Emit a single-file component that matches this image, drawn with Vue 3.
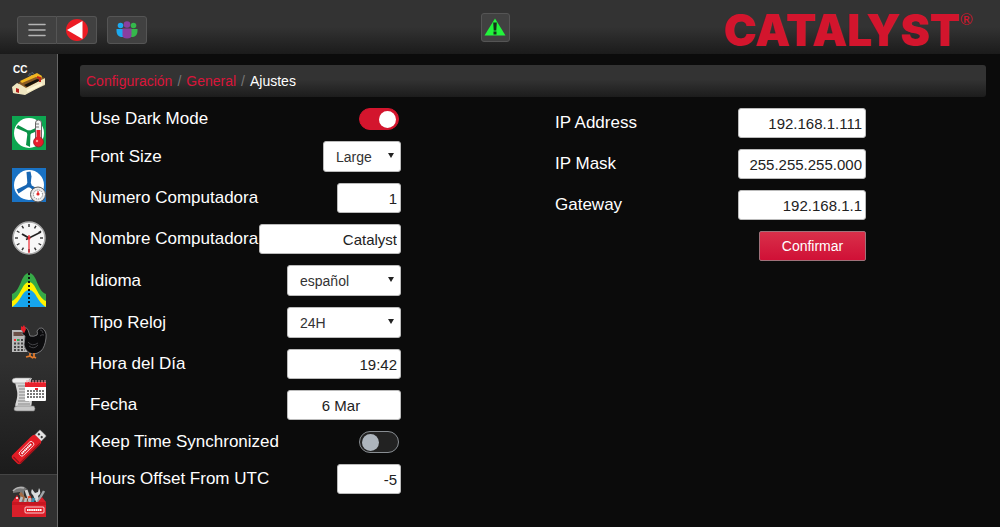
<script setup>
import { reactive, ref } from 'vue';

const menuItems = [
    { id: 'house', title: 'Control' },
    { id: 'temperature', title: 'Temperatura' },
    { id: 'fan', title: 'Ventilación' },
    { id: 'clock', title: 'Reloj' },
    { id: 'curve', title: 'Curva' },
    { id: 'flock', title: 'Lote' },
    { id: 'history', title: 'Historial' },
    { id: 'usb', title: 'USB' },
    { id: 'tools', title: 'Configuración' }
];
const activeItem = ref('tools');

const settings = reactive({
    darkMode: true,
    fontSize: 'Large',
    number: '1',
    name: 'Catalyst',
    language: 'español',
    clockType: '24H',
    time: '19:42',
    date: '6 Mar',
    keepSync: false,
    utcOffset: '-5'
});

const network = reactive({
    address: '192.168.1.111',
    mask: '255.255.255.000',
    gateway: '192.168.1.1'
});

// clock face ticks, one every 30 degrees
const ticks = Array.from({ length: 12 }, (_, i) => i * 30);
</script>

<template>
    <div class="app">
        <header class="topbar">
            <div class="topbar-left">
                <div class="btn-group">
                    <button type="button" class="tool-btn" aria-label="Menú">
                        <svg width="18" height="14" viewBox="0 0 18 14">
                            <path d="M1 1.5h16M1 7h16M1 12.5h16" stroke="#b4b4b4" stroke-width="1.6" stroke-linecap="round" />
                        </svg>
                    </button>
                    <button type="button" class="tool-btn" aria-label="Atrás">
                        <svg width="22" height="22" viewBox="0 0 22 22">
                            <circle cx="11" cy="11" r="11" fill="#ec1c24" />
                            <path d="M1 11L16.5 2v18z" fill="#fff" />
                        </svg>
                    </button>
                </div>
                <button type="button" class="tool-btn" aria-label="Usuarios">
                    <svg width="22" height="18" viewBox="0 0 22 18">
                        <circle cx="4.5" cy="4.5" r="2.8" fill="#1caaf0" />
                        <path d="M.5 8h7.5v8H5Q.5 15 .5 10z" fill="#1caaf0" />
                        <circle cx="17.5" cy="4.5" r="2.8" fill="#35b84b" />
                        <path d="M14 8h7.5v2q0 5-4.5 6h-3z" fill="#35b84b" />
                        <circle cx="11" cy="3.5" r="3.3" fill="#8a3fa0" />
                        <path d="M6.5 7.5h9v7q0 3-4.5 3t-4.5-3z" fill="#8a3fa0" />
                    </svg>
                </button>
            </div>
            <button type="button" class="tool-btn alarm" aria-label="Alarmas">
                <svg width="22" height="18" viewBox="0 0 22 18">
                    <path d="M11 .5L21.5 17.5H.5z" fill="#22f53c" />
                    <path d="M9.2 4.5h3.6l-.5 8H9.7z" fill="#14301a" />
                    <rect x="9.5" y="13.5" width="3" height="3" fill="#14301a" />
                </svg>
            </button>
            <div class="logo"><span>CATALYST</span><sup>®</sup></div>
        </header>

        <div class="body">
            <nav class="sidebar">
                <a
                    v-for="item in menuItems"
                    :key="item.id"
                    href="#"
                    :class="{ active: item.id === activeItem }"
                    :aria-label="item.title"
                    @click.prevent="activeItem = item.id"
                >
                    <svg v-if="item.id === 'house'" width="34" height="34" viewBox="0 0 34 34">
                        <text x="1" y="10" class="cc">CC</text>
                        <path d="M1 25L20 12l13 4v6L13 31 1 30z" fill="#d8cda4" />
                        <path d="M0 24l5-4 9 4 19-9v6l-20 11-12-2z" fill="#efe5c0" />
                        <path d="M6 20L21 12l12 3-19 10z" fill="#8a5a24" />
                        <path d="M8 18L25 10l5 3-1 3-5-2-14 6z" fill="#f0b521" />
                        <path d="M12 22l13-6 4 1-14 7z" fill="#17120d" />
                        <path d="M4 25l3 1v4l-3-1z" fill="#b3201c" />
                        <path d="M15 28l15-7" stroke="#fff7d6" stroke-width="2" />
                        <path d="M16 13l2-3v3M20 11v-2l2 2" stroke="#4e5a66" fill="none" />
                        <path d="M25 14l3 1v4" stroke="#c02318" stroke-width="2" fill="none" />
                    </svg>

                    <svg v-else-if="item.id === 'temperature'" width="34" height="34" viewBox="0 0 34 34">
                        <rect width="34" height="34" fill="#0da651" />
                        <circle cx="17" cy="17" r="15" fill="#fff" />
                        <g fill="#0a9247">
                            <path d="M16 17L4 12l2-3 11 6z" />
                            <path d="M15.5 17L14 29l4 2 .5-14z" />
                            <path d="M17 15l9-4 2 3-10 4z" />
                            <circle cx="17" cy="16.5" r="2.2" />
                        </g>
                        <rect x="23.5" y="4" width="6" height="21" rx="3" fill="#f3f3f3" stroke="#666" />
                        <circle cx="26.5" cy="26" r="5" fill="#e81c2b" stroke="#8d1a22" stroke-width=".7" />
                        <path d="M26.5 14v12" stroke="#e81c2b" stroke-width="4" />
                        <path d="M24 8h3M24 11h3" stroke="#555" stroke-width=".8" />
                        <circle cx="25" cy="25" r="1.2" fill="#ff9a9a" />
                    </svg>

                    <svg v-else-if="item.id === 'fan'" width="34" height="34" viewBox="0 0 34 34">
                        <rect width="34" height="34" fill="#1972c4" />
                        <circle cx="17" cy="17" r="15" fill="#fff" />
                        <g fill="#1766b3">
                            <path d="M15.5 17L14.5 4l4-.5 1 5-1 8.5z" />
                            <path d="M16 16L4.5 21.5l2 4L18 18z" />
                            <path d="M17 16l11 6-2 4-10-8z" />
                            <circle cx="17" cy="17" r="2.5" />
                        </g>
                        <circle cx="26" cy="26.5" r="7.5" fill="#e9e9e9" stroke="#575757" />
                        <circle cx="26" cy="26.5" r="4.5" fill="#fff" stroke="#777" stroke-dasharray="1 1" />
                        <circle cx="26" cy="26" r="1.6" fill="#e42626" />
                        <path d="M26 26v-3" stroke="#e42626" />
                    </svg>

                    <svg v-else-if="item.id === 'clock'" width="34" height="34" viewBox="0 0 34 34">
                        <circle cx="17" cy="17" r="16" fill="#f7f7f7" stroke="#aaa" stroke-width="1.5" />
                        <path
                            v-for="angle in ticks"
                            :key="angle"
                            d="M17 3v3"
                            stroke="#333"
                            stroke-width="1.4"
                            :transform="`rotate(${angle} 17 17)`"
                        />
                        <path d="M17 17l-7-4" stroke="#222" stroke-width="2" />
                        <path d="M14 18.5L29 11" stroke="#222" stroke-width="1.5" />
                        <path d="M17 14v18" stroke="#ee2630" stroke-width="1.2" />
                        <circle cx="17" cy="17" r="1.5" fill="#ee2630" />
                    </svg>

                    <svg v-else-if="item.id === 'curve'" width="34" height="34" viewBox="0 0 34 34">
                        <path d="M0 34V21C9 18 9 0 17 0s8 18 17 21v13z" fill="#36aa47" />
                        <path d="M0 34v-6C9 24 10 9 17 9s8 15 17 19v6z" fill="#fff200" />
                        <path d="M0 34C9 29 10 17 17 17s8 12 17 17z" fill="#16a4ed" />
                        <path d="M17 0v34" stroke="#111" stroke-width="2" stroke-dasharray="2 2" />
                    </svg>

                    <svg v-else-if="item.id === 'flock'" width="34" height="34" viewBox="0 0 34 34">
                        <rect y="5" width="15" height="22" fill="#b9b9b9" />
                        <rect x="1.5" y="7" width="10" height="4" fill="#6b5148" />
                        <g stroke="#444" stroke-width="2" stroke-dasharray="2 1.5">
                            <path d="M2 15h11M2 18.5h11M2 22h11M2 25h11" />
                        </g>
                        <path d="M2 15h2" stroke="#e33" stroke-width="2" />
                        <path d="M5 15h2" stroke="#2ba84a" stroke-width="2" />
                        <path
                            d="M11 4q3-3 5 1l2 6q4 1 7-1 1-1 0-4 2-4 5-3 5 3 4 10-1 9-5 13-4 3-8 3-7-1-9-9l1-9-3-2z"
                            fill="#0c0c0e"
                            stroke="#8a8a8d"
                            stroke-width=".8"
                        />
                        <path d="M16 17q4 5 10 1M17 21q5 4 9-1M28 5q2-1 3 3M28 11q2-2 4-1" stroke="#5a5a5e" stroke-width=".7" fill="none" />
                        <path d="M9 1l1.5 1L12 0l2 4-2 4.500-1.5-2.500L9 5z" fill="#e6202a" />
                        <path d="M18 28v3l-4 1M22 28v4l2 1M18 31l3 2M22 32l-2 1" stroke="#e07a2c" stroke-width="1.8" fill="none" />
                    </svg>

                    <svg v-else-if="item.id === 'history'" width="34" height="34" viewBox="0 0 34 34">
                        <path d="M3 0h17q-3 4-1 12t0 18H5q-3-1-1-6 2-7 1-11T3 4z" fill="#d6d6d6" />
                        <path d="M0 3q0-3 4-3h15q-3 1-2 5H4Q1 6 0 3z" fill="#ededed" stroke="#8e8e8e" stroke-width=".6" />
                        <path d="M2 31q0-3 4-3h16q2 3 0 5H5q-3 0-3-2z" fill="#c8c8c8" stroke="#777" stroke-width=".6" />
                        <path d="M6 8h10M7 11h9M7 14h10M7 17h10M7 20h10M6 23h11M6 26h12" stroke="#858585" stroke-width="1.2" />
                        <rect x="13" y="4" width="21" height="19" rx="1" fill="#fff" />
                        <path d="M13 9V5q0-1 1-1h19q1 0 1 1v4z" fill="#e8222c" />
                        <path d="M15 5V2M18 5V2M21 5V2M24 5V2M27 5V2M30 5V2M33 5V2" stroke="#f3a0a4" />
                        <path d="M15 13h17M15 16h17M15 19h17" stroke="#777" stroke-width="2" stroke-dasharray="2 1" />
                        <rect x="23" y="10" width="3" height="2" fill="#e8222c" />
                    </svg>

                    <svg v-else-if="item.id === 'usb'" width="34" height="34" viewBox="0 0 34 34">
                        <g transform="rotate(-45 17 17)">
                            <rect x="29" y="12.5" width="8" height="9" rx="1" fill="#e4e4e4" stroke="#999" stroke-width=".5" />
                            <rect x="32" y="14" width="2" height="2" fill="#333" />
                            <rect x="32" y="18" width="2" height="2" fill="#333" />
                            <path d="M0 11h26q4 0 4 3v6q0 3-4 3H0q-3 0-3-3v-6q0-3 3-3z" fill="#e31c25" />
                            <path d="M-2 21.5h30q-1 1.5-3 1.5H0z" fill="#9c1219" />
                            <rect x="5" y="14" width="18" height="5" rx="2" fill="#d9141d" stroke="#fff" stroke-width=".8" />
                            <path d="M7 16.500h14" stroke="#fff" stroke-width="2" stroke-dasharray="1.6 .4" />
                            <path d="M-1 13v8" stroke="#82141a" />
                        </g>
                    </svg>

                    <svg v-else width="34" height="34" viewBox="0 0 34 34">
                        <path d="M8 21V8L1 9q0-4 4-5Q11 0 15 5l-3 2v14z" fill="#777" />
                        <path d="M1 7q4-5 11-3" stroke="#b4b4b4" stroke-width="1.5" fill="none" />
                        <path d="M8 9l9 12" stroke="#a36a43" stroke-width="3" />
                        <path d="M14 6l5 14" stroke="#d4d4d4" stroke-width="3" />
                        <path d="M25 20L21 11q-3-2-1-6l3 4 3-1 1-4q3 5-1 8l3 8z" fill="#d9dddd" />
                        <path d="M17 12l3 8" stroke="#e84a2a" stroke-width="3" />
                        <path d="M32 7l-8 14" stroke="#9fa5a8" stroke-width="2.5" />
                        <path d="M0 18L5 11l4 7h17l4-5 4 5v15H0z" fill="#d91f2a" />
                        <path d="M8 18l2-5M13 19l1-5M18 20v-6" stroke="#b8bfc2" stroke-width="2.5" />
                        <path d="M20 19l2-5" stroke="#3f91b0" stroke-width="3" />
                        <path d="M0 18h34v3H0z" fill="#c71620" />
                        <circle cx="5" cy="14" r="1" fill="#fff" />
                        <rect x="13" y="23" width="19" height="6" rx="1" fill="#e31c25" stroke="#fff" stroke-width=".8" />
                        <path d="M15 26h15" stroke="#fff" stroke-width="2.2" stroke-dasharray="1.7 .4" />
                    </svg>
                </a>
            </nav>

            <main class="content">
                <nav class="breadcrumb" aria-label="breadcrumb">
                    <a href="#">Configuración</a>
                    <span class="sep">/</span>
                    <a href="#">General</a>
                    <span class="sep">/</span>
                    <span>Ajustes</span>
                </nav>

                <div class="columns">
                    <form class="form" @submit.prevent>
                        <div class="row row-switch">
                            <label for="dark-mode">Use Dark Mode</label>
                            <input id="dark-mode" v-model="settings.darkMode" type="checkbox" class="switch">
                        </div>
                        <div class="row">
                            <label for="font-size">Font Size</label>
                            <div class="select-box narrow">
                                <select id="font-size" v-model="settings.fontSize">
                                    <option>Small</option>
                                    <option>Large</option>
                                </select>
                            </div>
                        </div>
                        <div class="row">
                            <label for="pc-number">Numero Computadora</label>
                            <input id="pc-number" v-model="settings.number" type="text" class="field short">
                        </div>
                        <div class="row">
                            <label for="pc-name">Nombre Computadora</label>
                            <input id="pc-name" v-model="settings.name" type="text" class="field long">
                        </div>
                        <div class="row">
                            <label for="language">Idioma</label>
                            <div class="select-box">
                                <select id="language" v-model="settings.language">
                                    <option>español</option>
                                    <option>english</option>
                                </select>
                            </div>
                        </div>
                        <div class="row">
                            <label for="clock-type">Tipo Reloj</label>
                            <div class="select-box">
                                <select id="clock-type" v-model="settings.clockType">
                                    <option>24H</option>
                                    <option>12H</option>
                                </select>
                            </div>
                        </div>
                        <div class="row">
                            <label for="time">Hora del Día</label>
                            <input id="time" v-model="settings.time" type="text" class="field">
                        </div>
                        <div class="row">
                            <label for="date">Fecha</label>
                            <input id="date" v-model="settings.date" type="text" class="field date">
                        </div>
                        <div class="row row-switch">
                            <label for="keep-sync">Keep Time Synchronized</label>
                            <input id="keep-sync" v-model="settings.keepSync" type="checkbox" class="switch">
                        </div>
                        <div class="row">
                            <label for="utc-offset">Hours Offset From UTC</label>
                            <input id="utc-offset" v-model="settings.utcOffset" type="text" class="field short">
                        </div>
                    </form>

                    <form class="form" @submit.prevent>
                        <div class="row">
                            <label for="ip-address">IP Address</label>
                            <input id="ip-address" v-model="network.address" type="text" class="field ip">
                        </div>
                        <div class="row">
                            <label for="ip-mask">IP Mask</label>
                            <input id="ip-mask" v-model="network.mask" type="text" class="field ip">
                        </div>
                        <div class="row">
                            <label for="gateway">Gateway</label>
                            <input id="gateway" v-model="network.gateway" type="text" class="field ip">
                        </div>
                        <button type="submit" class="confirm">Confirmar</button>
                    </form>
                </div>
            </main>
        </div>
    </div>
</template>

<style>
body {
    margin: 0;
    background-color: #0b0b0b;
}
</style>

<style scoped>
.app {
    min-height: 100vh;
    display: flex;
    flex-direction: column;
    color: white;
    font-family: Arial, "Liberation Sans", sans-serif;
    font-size: 14px;
}

.app * {
    box-sizing: border-box;
}

.topbar {
    display: grid;
    grid-template-columns: 1fr auto 1fr;
    align-items: center;
    height: 54px;
    padding: 0 27px 0 17px;
    background: linear-gradient(#333 50%, #1b1b1b);
}

.topbar-left {
    display: flex;
    gap: 10px;
    padding-top: 6px;
}

.btn-group {
    display: flex;
}

.tool-btn {
    display: flex;
    align-items: center;
    justify-content: center;
    width: 40px;
    height: 28px;
    padding: 0;
    background-color: #414141;
    border: 1px solid #555;
    border-radius: 3px;
    cursor: pointer;
}

.btn-group .tool-btn:first-child {
    border-radius: 3px 0 0 3px;
}

.btn-group .tool-btn:last-child {
    border-left: 0;
    border-radius: 0 3px 3px 0;
}

.alarm {
    width: 29px;
    height: 29px;
}

.logo {
    display: flex;
    justify-content: flex-end;
    align-items: flex-start;
    padding-top: 5px;
    color: #d3152d;
    font-family: Inter, "Liberation Sans", sans-serif;
    font-size: 44px;
    font-weight: 900;
    line-height: 44px;
}

.logo sup {
    font-family: Lato, "Liberation Sans", sans-serif;
    font-size: 16px;
    font-weight: 400;
    line-height: 22px;
}

.body {
    flex: 1;
    display: flex;
}

.sidebar {
    display: flex;
    flex-direction: column;
    width: 58px;
    background: linear-gradient(#303030 65%, #1b1b1b 89%);
    border-right: 1px solid #666;
}

.sidebar a {
    flex: 1;
    display: flex;
    align-items: center;
    justify-content: center;
    min-height: 52px;
}

.sidebar a.active {
    background-color: #303030;
    border-top: 1px solid #444;
}

.sidebar svg {
    overflow: visible;
}

.cc {
    fill: white;
    font-size: 10px;
    font-weight: bold;
}

.content {
    flex: 1;
    padding-top: 11px;
}

.breadcrumb {
    display: flex;
    align-items: center;
    gap: 5px;
    height: 32px;
    margin: 0 14px 0 22px;
    padding: 0 6px;
    background: linear-gradient(#333 45%, #1c1c1c);
    border-radius: 3px;
}

.breadcrumb a {
    color: #d9153a;
    text-decoration: none;
}

.sep {
    color: #777;
}

.columns {
    display: grid;
    grid-template-columns: 1fr 1fr;
    padding: 11px 2px 24px 10px;
}

.form {
    display: flex;
    flex-direction: column;
    gap: 11px;
    max-width: 333px;
    padding-left: 22px;
}

.row {
    display: flex;
    align-items: center;
    justify-content: space-between;
}

.row-switch {
    height: 22px;
    padding-right: 2px;
}

.row label {
    font-size: 17px;
    line-height: 20px;
    white-space: nowrap;
}

.field {
    width: 114px;
    height: 30px;
    padding: 0 3px;
    background-color: white;
    border: 1px solid #bbb;
    border-radius: 3px;
    color: #222;
    font-family: inherit;
    font-size: 15px;
    text-align: right;
}

.field.short {
    width: 64px;
}

.field.long {
    width: 142px;
}

.field.ip {
    width: 128px;
}

.field.date {
    padding-right: 9px;
    text-align: center;
}

.select-box {
    position: relative;
    width: 114px;
}

.select-box.narrow {
    width: 78px;
}

.select-box::after {
    content: '';
    position: absolute;
    top: 12px;
    right: 7px;
    border: 3px solid transparent;
    border-top: 5px solid #222;
    border-bottom: 0;
    pointer-events: none;
}

.select-box select {
    display: block;
    appearance: none;
    width: 100%;
    height: 31px;
    padding: 0 12px;
    background-color: white;
    border: 1px solid #bbb;
    border-radius: 3px;
    color: #333;
    font-family: inherit;
    font-size: 14px;
}

.switch {
    appearance: none;
    display: flex;
    align-items: center;
    width: 40px;
    height: 22px;
    margin: 0;
    padding: 0 2px;
    background-color: #222;
    border: 1px solid #888d92;
    border-radius: 11px;
    cursor: pointer;
}

.switch::before {
    content: '';
    width: 17px;
    height: 17px;
    background-color: #adb5bd;
    border-radius: 50%;
}

.switch:checked {
    justify-content: flex-end;
    background-color: #d3152d;
    border-color: #d3152d;
}

.switch:checked::before {
    background-color: white;
}

.confirm {
    align-self: flex-end;
    width: 107px;
    height: 30px;
    padding: 0;
    background: linear-gradient(#d9304a, #d01036);
    border: 1px solid #a0717a;
    border-radius: 2px;
    color: white;
    font-family: inherit;
    font-size: 14px;
    cursor: pointer;
}
</style>
